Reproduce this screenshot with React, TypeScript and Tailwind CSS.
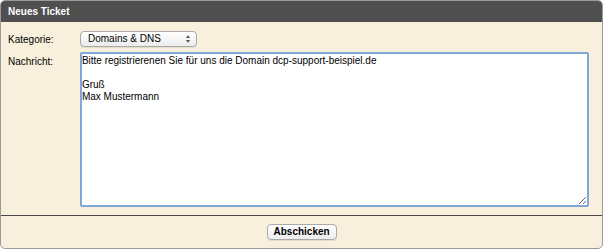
import React, { useState } from 'react';

export default function App() {
  const [kategorie, setKategorie] = useState('dns');
  const [nachricht, setNachricht] = useState(
    'Bitte registrierenen Sie für uns die Domain dcp-support-beispiel.de\n\nGruß\nMax Mustermann'
  );

  return (
    <div className="w-[604px] h-[251px] bg-white font-['Liberation_Sans',Arial,sans-serif] text-[10px] text-black">
      <div className="w-[603px] rounded-[5px] border border-[#9a9a9a] bg-[#f8f0dd] overflow-hidden">
        {/* header */}
        <div className="h-[21px] bg-[#4f4f4f] pl-[7px] flex items-center text-white font-bold text-[10px]">
          Neues Ticket
        </div>

        {/* form */}
        <div className="pt-[9px] pl-[7px] pr-[13px] pb-[8px] flex flex-col gap-[5px]">
          <div className="flex items-center">
            <label className="w-[72px]">Kategorie:</label>
            <div className="relative w-[117px] h-[16px]">
              <select
                value={kategorie}
                onChange={(e) => setKategorie(e.target.value)}
                className="appearance-none w-full h-full rounded-[4px] border border-[#a9a9a9] bg-gradient-to-b from-white to-[#ececec] pl-[7px] text-[10px] leading-[14px] shadow-[0_1px_0_rgba(0,0,0,0.08)]"
              >
                <option value="dns">Domains &amp; DNS</option>
                <option value="hosting">Hosting</option>
              </select>
              <svg className="absolute right-[6px] top-[3px] pointer-events-none" width="6" height="10" viewBox="0 0 6 10">
                <path d="M0.8 4 L3 1.3 L5.2 4 Z" fill="#555" />
                <path d="M0.8 6 L3 8.7 L5.2 6 Z" fill="#555" />
              </svg>
            </div>
          </div>

          <div className="flex items-start">
            <label className="w-[72px] pt-[2px]">Nachricht:</label>
            <textarea
              value={nachricht}
              onChange={(e) => setNachricht(e.target.value)}
              className="w-[510px] h-[155px] resize-y border-2 border-[#7fa8d8] rounded-[2px] bg-white px-[0px] py-[1px] text-[10px] leading-[12px] outline-none"
            />
          </div>
        </div>

        {/* footer */}
        <div className="border-t border-[#4a4a4a] h-[33px] flex items-center justify-center">
          <button
            type="button"
            className="h-[16px] px-[6px] w-[70px] rounded-[4px] border border-[#a9a9a9] bg-gradient-to-b from-white to-[#ececec] font-bold text-[10px] leading-[14px] shadow-[0_1px_0_rgba(0,0,0,0.08)]"
          >
            Abschicken
          </button>
        </div>
      </div>
    </div>
  );
}
